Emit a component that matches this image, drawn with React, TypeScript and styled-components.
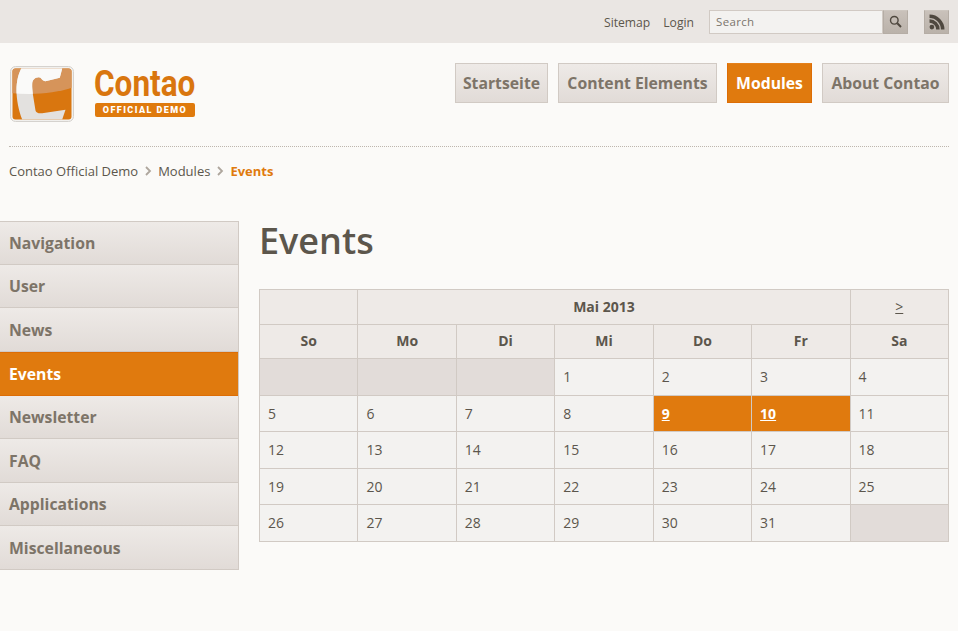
import React from 'react';
import styled, { createGlobalStyle, css } from 'styled-components';

const GlobalStyle = createGlobalStyle`
  html, body { margin: 0; padding: 0; background: #fbfaf8; }
  body { font-family: "Open Sans", "Noto Sans", sans-serif; font-size: 13px; color: #5c564c; }
`;

const Page = styled.div`
  width: 958px; height: 631px; overflow: hidden;
`;

const TopBar = styled.div`
  height: 43px; background: #eae6e3; box-sizing: border-box;
  display: flex; align-items: center; justify-content: flex-end;
  padding: 0 9px 0 0;
`;
const TopLink = styled.a`
  font-size: 12.15px; color: #5c564c; margin-right: 13px; line-height: 17px; padding-top: 2px;
`;
const SearchForm = styled.div`
  display: flex; margin: 0 16px 0 2px; height: 24px;
`;
const SearchInput = styled.div`
  width: 174px; box-sizing: border-box; height: 24px;
  background: #f3f2f0; border: 1px solid #d1cac4;
  font-size: 11.5px; color: #7b756c; letter-spacing: .35px;
  padding: 0 6px; line-height: 21px;
`;
const IconButton = styled.div`
  width: 25px; height: 24px; box-sizing: border-box;
  background: linear-gradient(#c9c1ba, #bab2aa);
  border: 1px solid #b5ada5; border-top-color: #cdc6bf;
  display: flex; align-items: center; justify-content: center;
`;
const Header = styled.div`
  height: 103px; box-sizing: border-box; padding: 20px 9px 0 9.5px;
  display: flex; justify-content: space-between; align-items: flex-start;
`;
const Logo = styled.div`
  display: flex; align-items: flex-start; margin-top: 2.5px;
`;
const LogoText = styled.div`
  margin-left: 21.5px; width: 100px; padding-top: 3px;
`;
const LogoName = styled.div`
  font-family: "Roboto", sans-serif; font-weight: 700;
  font-size: 36px; line-height: 31px; color: #d9760f; margin-left: -1px;
  transform: scaleX(.875); transform-origin: left center; white-space: nowrap;
`;
const LogoBadge = styled.div`
  background: #df7a0d; color: #fff; border-radius: 2px; height: 14px; margin-top: 3px;
  font-family: "Roboto", sans-serif; font-weight: 900; font-size: 9px; letter-spacing: 1.45px;
  text-align: center; line-height: 14px; white-space: nowrap;
`;
const MainNav = styled.nav`
  display: flex; gap: 10px;
`;
const NavButton = styled.a<{ $active?: boolean; $width: number }>`
  height: 40px; box-sizing: border-box; width: ${p => p.$width}px;
  display: flex; align-items: center; justify-content: center; white-space: nowrap;
  font-size: 15.75px; font-weight: 700; color: #7d7468;
  background: linear-gradient(#eeeae7, #e1dbd7);
  border: 1px solid #d1cac4;
  ${p => p.$active && css`
    background: #e07a0e; border: 1px solid #dd6d05; border-top-color: #e5801a; color: #fff;
  `}
`;
const BreadcrumbArea = styled.div`
  margin: 0 9px; border-top: 1px dotted #bdb6ae; height: 75px; box-sizing: border-box;
  display: flex; align-items: center; padding-bottom: 27px; font-size: 13px; color: #5c564c;
`;
const Sep = styled.span`
  display: inline-flex; margin: 0 6.5px; width: 7px; justify-content: center;
`;
const Current = styled.span`
  color: #e07a0e; font-weight: 700;
`;
const Body = styled.div`
  display: flex; align-items: flex-start;
`;
const Sidebar = styled.ul`
  list-style: none; margin: 0; padding: 0; width: 239px; flex: none;
  border-right: 1px solid #d1cac4; box-sizing: border-box;
`;
const SideItem = styled.li<{ $active?: boolean }>`
  height: 43.625px; box-sizing: border-box; padding: 0.6px 0 0 9px;
  display: flex; align-items: center;
  font-size: 15.75px; font-weight: 700; color: #7d7468;
  background: linear-gradient(#eeeae7, #e1dbd7);
  border-bottom: 1px solid #d1cac4;
  &:first-child { border-top: 1px solid #d1cac4; padding-top: 0; }
  ${p => p.$active && css`
    background: #e07a0e; color: #fff;
    border-top: 1px solid #dd6d05; border-bottom: 1px solid #dd6d05; padding-top: 0;
  `}
`;
const Content = styled.main`
  margin-left: 20px; width: 690px;
`;
const Title = styled.h1`
  margin: -2px 0 27px; font-size: 36px; font-weight: 600; line-height: 43px; color: #5c564c;
  height: 43px;
`;
const Table = styled.table`
  border-collapse: collapse; table-layout: fixed; width: 690px; font-size: 14px;
`;
const HeadCell = styled.th`
  background: #eeeae7; border: 1px solid #d1cac4; font-size: 14px; font-weight: 700;
  color: #5c564c; text-align: center; padding: 0 0 2px; height: 32px;
`;
const WeekdayCell = styled(HeadCell)`
  height: 31px;
`;
const NextLink = styled.a`
  font-weight: 400; text-decoration: underline; color: #5c564c;
`;
const DayCell = styled.td<{ $empty?: boolean; $active?: boolean }>`
  background: ${p => p.$empty ? '#e2dcd9' : p.$active ? '#e07a0e' : '#f3f2f0'};
  color: ${p => p.$active ? '#fff' : '#5c564c'};
  font-weight: ${p => p.$active ? 700 : 400};
  text-decoration: ${p => p.$active ? 'underline' : 'none'};
  border: 1px solid #d1cac4; padding: 0 8px; height: 35.5px;
`;

const SIDE = ['Navigation', 'User', 'News', 'Events', 'Newsletter', 'FAQ', 'Applications', 'Miscellaneous'];
const NAV: [string, number][] = [['Startseite', 93], ['Content Elements', 159], ['Modules', 85], ['About Contao', 127]];
const DAYS = ['So', 'Mo', 'Di', 'Mi', 'Do', 'Fr', 'Sa'];
const WEEKS: (number | null)[][] = [
  [null, null, null, 1, 2, 3, 4],
  [5, 6, 7, 8, 9, 10, 11],
  [12, 13, 14, 15, 16, 17, 18],
  [19, 20, 21, 22, 23, 24, 25],
  [26, 27, 28, 29, 30, 31, null],
];

const Chevron = () => (
  <svg width="7" height="10" viewBox="0 0 7 10">
    <path d="M1 1l4 4-4 4" fill="none" stroke="#aea69d" strokeWidth="1.8" />
  </svg>
);

const C_SHAPE = 'M11.2 2.500H52.200L49.800 11.800 35.500 15.200C32 15 31.500 11.200 28.800 11.200 25 11.200 22.200 14 22.200 17.800 22 22 22.500 24 22.800 27.800L25.500 44.500C26 46.500 28.500 47.800 32.200 47.200L55.500 43.800 52.200 53.500H12.200C8.500 44 6.500 33 6.500 24.500 6.500 15 8.500 8 11.200 2.500Z';

const LogoMark = () => (
  <svg width="64" height="56" viewBox="0 0 64 56">
    <defs>
      <clipPath id="logo-top">
        <path d="M0 0H64V21C44 28 22 29 0 27Z" />
      </clipPath>
    </defs>
    <rect x="0.500" y="0.500" width="63" height="55" rx="5" fill="#f1f0ee" stroke="#d5d2ce" />
    <rect x="2.500" y="2.500" width="59" height="51" rx="3" fill="#d9760f" />
    <rect x="2.500" y="2.500" width="59" height="51" rx="3" fill="#d6945a" clipPath="url(#logo-top)" />
    <path d={C_SHAPE} fill="#e3e1df" />
    <path d={C_SHAPE} fill="#fafaf9" clipPath="url(#logo-top)" />
  </svg>
);

const RssIcon = () => (
  <svg width="16" height="16" viewBox="0 0 15 15" fill="#4f483f">
    <circle cx="2.700" cy="12.300" r="2.200" />
    <path d="M.5 5v3.300a6.200 6.200 0 0 1 6.200 6.200h3.300A9.500 9.500 0 0 0 .5 5z" />
    <path d="M.5.500v3.300a10.700 10.700 0 0 1 10.700 10.700h3.300A14 14 0 0 0 .5.500z" />
  </svg>
);

const SearchIcon = () => (
  <svg width="13" height="13" viewBox="0 0 13 13" fill="none" stroke="#4f483f">
    <circle cx="5.300" cy="5.300" r="3.800" strokeWidth="1.400" />
    <path d="M8.300 8.300l3.700 3.700" strokeWidth="2" />
  </svg>
);

export default function App() {
  return (
    <Page>
      <GlobalStyle />
      <TopBar>
        <TopLink>Sitemap</TopLink>
        <TopLink>Login</TopLink>
        <SearchForm>
          <SearchInput>Search</SearchInput>
          <IconButton><SearchIcon /></IconButton>
        </SearchForm>
        <IconButton><RssIcon /></IconButton>
      </TopBar>
      <Header>
        <Logo>
          <LogoMark />
          <LogoText>
            <LogoName>Contao</LogoName>
            <LogoBadge>OFFICIAL DEMO</LogoBadge>
          </LogoText>
        </Logo>
        <MainNav>
          {NAV.map(([n, w]) => <NavButton key={n} $width={w} $active={n === 'Modules'}>{n}</NavButton>)}
        </MainNav>
      </Header>
      <BreadcrumbArea>
        Contao Official Demo<Sep><Chevron /></Sep>Modules<Sep><Chevron /></Sep><Current>Events</Current>
      </BreadcrumbArea>
      <Body>
        <Sidebar>
          {SIDE.map(s => <SideItem key={s} $active={s === 'Events'}>{s}</SideItem>)}
        </Sidebar>
        <Content>
          <Title>Events</Title>
          <Table>
            <thead>
              <tr>
                <HeadCell />
                <HeadCell colSpan={5}>Mai 2013</HeadCell>
                <HeadCell><NextLink>&gt;</NextLink></HeadCell>
              </tr>
              <tr>{DAYS.map(d => <WeekdayCell key={d}>{d}</WeekdayCell>)}</tr>
            </thead>
            <tbody>
              {WEEKS.map((w, i) => (
                <tr key={i}>
                  {w.map((d, j) => (
                    <DayCell key={j} $empty={d === null} $active={d === 9 || d === 10}>{d}</DayCell>
                  ))}
                </tr>
              ))}
            </tbody>
          </Table>
        </Content>
      </Body>
    </Page>
  );
}
